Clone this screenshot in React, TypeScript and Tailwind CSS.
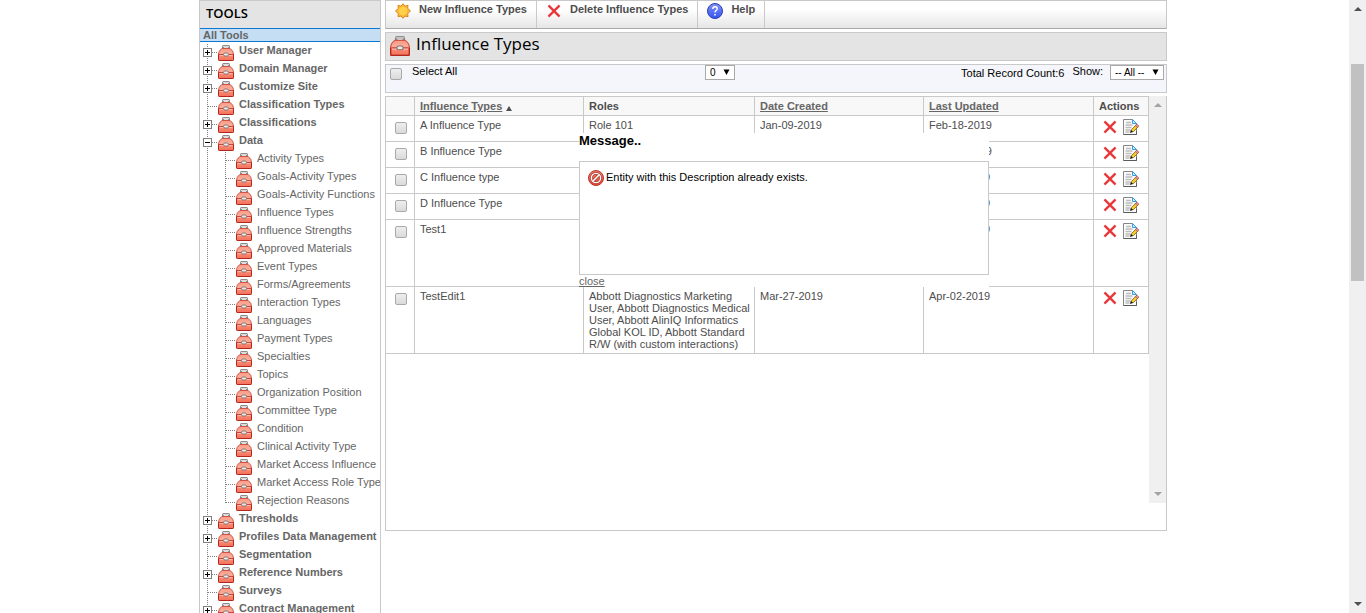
import React from "react";

type Node = { label: string; kind: "plus" | "minus" | "leaf"; children?: string[] };

const tree: Node[] = [
  { label: "User Manager", kind: "plus" },
  { label: "Domain Manager", kind: "plus" },
  { label: "Customize Site", kind: "plus" },
  { label: "Classification Types", kind: "leaf" },
  { label: "Classifications", kind: "plus" },
  {
    label: "Data",
    kind: "minus",
    children: [
      "Activity Types",
      "Goals-Activity Types",
      "Goals-Activity Functions",
      "Influence Types",
      "Influence Strengths",
      "Approved Materials",
      "Event Types",
      "Forms/Agreements",
      "Interaction Types",
      "Languages",
      "Payment Types",
      "Specialties",
      "Topics",
      "Organization Position",
      "Committee Type",
      "Condition",
      "Clinical Activity Type",
      "Market Access Influence",
      "Market Access Role Type",
      "Rejection Reasons",
    ],
  },
  { label: "Thresholds", kind: "plus" },
  { label: "Profiles Data Management", kind: "plus" },
  { label: "Segmentation", kind: "leaf" },
  { label: "Reference Numbers", kind: "plus" },
  { label: "Surveys", kind: "leaf" },
  { label: "Contract Management", kind: "plus" },
];

const rows = [
  { name: "A Influence Type", roles: "Role 101", created: "Jan-09-2019", updated: "Feb-18-2019", height: "h-[26px]" },
  { name: "B Influence Type", roles: "", created: "", updated: "Mar-27-2019", height: "h-[26px]" },
  { name: "C Influence type", roles: "", created: "", updated: "Apr-02-2019", height: "h-[26px]" },
  { name: "D Influence Type", roles: "", created: "", updated: "Apr-02-2019", height: "h-[26px]" },
  { name: "Test1", roles: "", created: "", updated: "Apr-02-2019", height: "h-[67px]" },
  {
    name: "TestEdit1",
    roles:
      "Abbott Diagnostics Marketing User, Abbott Diagnostics Medical User, Abbott AlinIQ Informatics Global KOL ID, Abbott Standard R/W (with custom interactions)",
    created: "Mar-27-2019",
    updated: "Apr-02-2019",
    height: "h-[67px]",
  },
];

function Toolbox({ className }: { className: string }) {
  return (
    <svg viewBox="0 0 16 16" className={className} aria-hidden="true">
      <defs>
        <linearGradient id="toolboxBody" x1="0" y1="0" x2="0" y2="1">
          <stop offset="0" stopColor="#f79a86" />
          <stop offset="0.4" stopColor="#fcae9a" />
          <stop offset="0.6" stopColor="#f88a74" />
          <stop offset="1" stopColor="#f4705a" />
        </linearGradient>
      </defs>
      <path d="M4 3.500V1.500Q4 0 5.500 0h5Q12 0 12 1.500v2z" fill="#8b8b8b" />
      <path d="M5 1h6v1H5z" fill="#dcdcdc" />
      <path d="M6 2.200h4v.9H6z" fill="#f4f4f4" />
      <path d="M3.800 3.500h8.400Q15.500 6 15.500 9v5.500q0 1-1 1h-13q-1 0-1-1V9Q.5 6 3.800 3.500z" fill="url(#toolboxBody)" stroke="#cf5546" />
      <path d="M.5 9.500v5q0 1 1 1h13q1 0 1-1v-5" fill="none" stroke="#b3261c" />
      <path d="M1 9.500h14" stroke="#c4483b" />
      <path d="M1.500 10.500h13" stroke="#ffc0ae" strokeWidth=".8" />
      <rect x="5.500" y="8" width="5" height="3" rx="1.400" fill="#e9e9e9" stroke="#85716d" strokeWidth=".9" />
    </svg>
  );
}

function Branch({ kind, last }: { kind: "plus" | "minus" | "leaf" | "line"; last?: boolean }) {
  return (
    <svg viewBox="0 0 18 18" className="h-[18px] w-[18px] shrink-0" shapeRendering="crispEdges" aria-hidden="true">
      <path d={last ? "M7.500 0v9" : "M7.500 0v18"} stroke="#808080" strokeDasharray="1 1" />
      {kind !== "line" && <path d="M8 8.500h10" stroke="#808080" strokeDasharray="1 1" />}
      {(kind === "plus" || kind === "minus") && (
        <>
          <rect x="3.500" y="4.500" width="8" height="8" fill="#fff" stroke="#808080" />
          <path d={kind === "plus" ? "M5 8.500h5M7.500 6v5" : "M5 8.500h5"} stroke="#000" />
        </>
      )}
    </svg>
  );
}

function Sun() {
  return (
    <svg viewBox="0 0 16 16" className="h-4 w-4" aria-hidden="true">
      <path
        d="M8 .7l1.900 2.500 3.100-.9-.3 3 2.800 2.700-2.800 2.500.3 3.200-3.100-.7L8 15.400l-1.900-2.400-3.100.7.300-3.200L.5 8l2.800-2.700-.3-3 3.100.9z"
        fill="#fbbd35"
        stroke="#dc8420"
      />
      <circle cx="8" cy="8" r="4" fill="#ffd04a" />
    </svg>
  );
}

function Cross() {
  return (
    <svg viewBox="0 0 16 16" className="h-4 w-4" aria-hidden="true">
      <path d="M2.500 2.500L13.500 13.500M13.500 2.500L2.500 13.500" stroke="#f4a6a6" strokeWidth="2.800" />
      <path d="M2.500 2.500L13.500 13.500M13.500 2.500L2.500 13.500" stroke="#e63235" strokeWidth="1.800" />
    </svg>
  );
}

function HelpIcon() {
  return (
    <svg viewBox="0 0 16 16" className="h-4 w-4" aria-hidden="true">
      <defs>
        <linearGradient id="helpFill" x1="0" y1="0" x2="0" y2="1">
          <stop offset="0" stopColor="#8593f2" />
          <stop offset="1" stopColor="#3354f2" />
        </linearGradient>
      </defs>
      <circle cx="8" cy="8" r="7.500" fill="url(#helpFill)" stroke="#2b3cae" />
      <path d="M5.800 6q0-2.200 2.200-2.200T10.200 5.800q0 1.100-1.100 1.800Q8 8.300 8 9.600" fill="none" stroke="#fff" strokeWidth="1.400" />
      <path d="M7.200 11h1.600v1.600H7.200z" fill="#fff" />
    </svg>
  );
}

function EditIcon() {
  return (
    <svg viewBox="0 0 16 16" className="h-4 w-4" aria-hidden="true">
      <path d="M.5.500h9L13.500 4.500v11H.5z" fill="#fbfbfb" stroke="#858585" />
      <path d="M.5 15.500h13V12" fill="none" stroke="#5c5c5c" />
      <path d="M3 3.500h5M2.500 6h7M2.500 8.500h6M2.500 11h5M2.500 13h4" stroke="#bdbdbd" strokeWidth="1.400" />
      <path d="M9.500.5v4h4z" fill="#cfeaff" stroke="#3b9be0" />
      <path d="M8 12.500l.6-2 4.600-4.600 2 2-4.700 4.600z" fill="#f9cb2c" stroke="#7a5a16" strokeWidth=".8" />
      <path d="M12.300 6.500l1-1q.6-.5 1.200.1l.9.900q.6.600 0 1.200l-1 1z" fill="#ee8f8f" stroke="#8c4444" strokeWidth=".6" />
      <path d="M7 14l.9-3 2.100 2.100z" fill="#111" />
    </svg>
  );
}

function StopIcon() {
  return (
    <svg viewBox="0 0 16 16" className="h-4 w-4 shrink-0" aria-hidden="true">
      <defs>
        <linearGradient id="stopFill" x1="0" y1="0" x2="0" y2="1">
          <stop offset="0" stopColor="#f0806f" />
          <stop offset="1" stopColor="#ec4430" />
        </linearGradient>
      </defs>
      <circle cx="8" cy="8" r="7.500" fill="url(#stopFill)" stroke="#b8392c" />
      <circle cx="8" cy="8" r="4.600" fill="none" stroke="#a5362b" strokeWidth="2.600" />
      <path d="M5 11l6-6" stroke="#a5362b" strokeWidth="3" />
      <circle cx="8" cy="8" r="4.600" fill="none" stroke="#fff" strokeWidth="1.400" />
      <path d="M5 11l6-6" stroke="#fff" strokeWidth="1.600" />
    </svg>
  );
}

function Triangle({ down, className }: { down?: boolean; className: string }) {
  return (
    <svg viewBox="0 0 8 4" preserveAspectRatio="none" className={className} aria-hidden="true">
      <path d={down ? "M0 0h8L4 4z" : "M0 4h8L4 0z"} fill="currentColor" />
    </svg>
  );
}

function Tick({ label, id }: { label?: string; id?: string }) {
  return (
    <input
      type="checkbox"
      id={id}
      aria-label={label}
      className="block h-3 w-3 shrink-0 appearance-none rounded-[2px] border border-[#a9a9a9] bg-linear-to-b from-[#eeeeee] to-[#dadada]"
    />
  );
}

function Picker({ id, label, value, className }: { id: string; label?: string; value: string; className: string }) {
  return (
    <span className={`relative block ${className}`}>
      <select
        id={id}
        aria-label={label}
        className="block h-[15px] w-full appearance-none border border-[#a9a9a9] bg-white pl-1 text-[10px] leading-[13px] text-black"
      >
        <option>{value}</option>
      </select>
      <svg viewBox="0 0 8 7" className="pointer-events-none absolute top-1 right-[5px] h-[6px] w-[7px]" aria-hidden="true">
        <path d="M.5.500h7L4 7z" fill="#000" />
      </svg>
    </span>
  );
}

function ToolButton({ icon, children }: { icon: React.ReactNode; children: string }) {
  return (
    <button type="button" className="flex items-start gap-2 border-r border-[#c9c9c9] pt-[2px] pr-[9px] pl-[9px] text-left">
      {icon}
      <span className="font-bold text-[#4d4d4d]">{children}</span>
    </button>
  );
}

export default function App() {
  return (
    <div className="flex h-screen overflow-hidden bg-white font-['Liberation_Sans',Arial,sans-serif] text-[11px] leading-3 text-[#4d4d4d]">
      <div className="flex min-w-0 flex-1 justify-center pl-[17px]">
        <div className="flex w-full max-w-[968px] gap-1">
          <aside className="w-[182px] shrink-0 overflow-hidden border border-b-0 border-[#c9c9c9]">
            <h2 className="h-[27px] bg-[#e4e4e4] pt-[3px] pl-[6px] font-['Open_Sans',sans-serif] text-[13px] leading-[18px] font-semibold text-black">
              TOOLS
            </h2>
            <a href="#all" className="block border-y border-[#0a78d0] bg-[#c5def4] pl-[3px] font-bold text-[#666]">
              All Tools
            </a>
            <ul className="pt-[2px] whitespace-nowrap text-[#666]">
              {tree.map((n) => (
                <li key={n.label}>
                  <div className="flex h-[18px]">
                    <Branch kind={n.kind} />
                    <Toolbox className="mt-px h-4 w-4 shrink-0" />
                    <a href="#tool" className="pl-[5px] font-bold">
                      {n.label}
                    </a>
                  </div>
                  {n.children && (
                    <ul>
                      {n.children.map((c, i) => (
                        <li key={c} className="flex h-[18px]">
                          <Branch kind="line" />
                          <Branch kind="leaf" last={i === n.children!.length - 1} />
                          <Toolbox className="mt-px h-4 w-4 shrink-0" />
                          <a href="#tool" className="pl-[5px]">
                            {c}
                          </a>
                        </li>
                      ))}
                    </ul>
                  )}
                </li>
              ))}
            </ul>
          </aside>

          <main className="flex min-w-0 flex-1 flex-col gap-[3px]">
            <div className="flex h-[29px] shrink-0 border border-[#c9c9c9] border-b-[#a9a9a9] bg-linear-to-b from-white from-30% to-[#e6e6e6]">
              <ToolButton icon={<Sun />}>New Influence Types</ToolButton>
              <ToolButton icon={<Cross />}>Delete Influence Types</ToolButton>
              <ToolButton icon={<HelpIcon />}>Help</ToolButton>
            </div>

            <div className="flex h-[29px] shrink-0 items-start gap-[6px] border border-[#c9c9c9] bg-[#e4e4e4] pl-1">
              <Toolbox className="mt-[3px] h-5 w-5" />
              <h1 className="font-['Open_Sans',sans-serif] text-[17px] leading-[22px] text-black">Influence Types</h1>
            </div>

            <div className="grid h-[29px] shrink-0 grid-cols-[41%_auto_1fr] items-start border border-[#c9c9c9] bg-[#f4f6fb] pr-[2px] text-black">
              <div className="flex items-start gap-[10px] pl-1">
                <span className="pt-[3px]">
                  <Tick id="select-all" />
                </span>
                <label htmlFor="select-all">Select All</label>
              </div>
              <Picker id="page" label="Page" value="0" className="w-[30px]" />
              <div className="flex items-start justify-end">
                <span className="pt-[2px]">Total Record Count:6</span>
                <label htmlFor="show" className="pr-[7px] pl-2">
                  Show:
                </label>
                <Picker id="show" value="-- All --" className="w-[54px]" />
              </div>
            </div>

            <section className="relative flex h-[435px] shrink-0 border border-[#c9c9c9]">
              <div className="min-w-0 flex-1">
                <table className="w-full table-fixed border-separate border-spacing-0 [&_td]:border-r [&_td]:border-b [&_td]:border-[#c9c9c9] [&_td]:px-[5px] [&_td]:pt-[3px] [&_td]:align-top [&_th]:border-r [&_th]:border-b [&_th]:border-[#c9c9c9] [&_th]:px-[5px] [&_th]:py-[3px] [&_th]:text-left">
                  <thead>
                    <tr className="h-[19px] bg-[#f8f8f8]">
                      <th className="w-[29px]" aria-label="Select" />
                      <th className="w-[169px]">
                        <a href="#name" className="text-[#666] underline">
                          Influence Types
                        </a>
                        <Triangle className="ml-1 inline-block h-[5px] w-[6px] align-[-1px]" />
                      </th>
                      <th className="w-[171px]">Roles</th>
                      <th className="w-[169px]">
                        <a href="#created" className="text-[#666] underline">
                          Date Created
                        </a>
                      </th>
                      <th>
                        <a href="#updated" className="text-[#666] underline">
                          Last Updated
                        </a>
                      </th>
                      <th className="w-[55px]">Actions</th>
                    </tr>
                  </thead>
                  <tbody>
                    {rows.map((r) => (
                      <tr key={r.name} className={r.height}>
                        <td>
                          <div className="pt-[3px] pl-1">
                            <Tick label={r.name} />
                          </div>
                        </td>
                        <td>{r.name}</td>
                        <td className="pr-0!">{r.roles}</td>
                        <td>{r.created}</td>
                        <td>{r.updated}</td>
                        <td>
                          <div className="flex gap-[5px] pl-[3px]">
                            <button type="button" aria-label="Delete">
                              <Cross />
                            </button>
                            <button type="button" aria-label="Edit">
                              <EditIcon />
                            </button>
                          </div>
                        </td>
                      </tr>
                    ))}
                  </tbody>
                </table>
              </div>
              <div className="-mt-px flex h-[407px] w-[17px] shrink-0 flex-col items-center justify-between bg-[#f0f0f0] py-[7px] text-[#a3a3a3]">
                <Triangle className="h-1 w-2" />
                <Triangle down className="h-1 w-2" />
              </div>

              <div role="dialog" aria-labelledby="message-title" className="absolute top-9 left-[193px] w-[410px] bg-white text-black">
                <h2 id="message-title" className="h-7 text-[13px] leading-4 font-bold">
                  Message..
                </h2>
                <div className="flex h-[114px] items-start border border-[#c9c9c9] p-2">
                  <StopIcon />
                  <p className="pt-[1px] pl-[2px]">Entity with this Description already exists.</p>
                </div>
                <a href="#close" className="block text-[#666] underline">
                  close
                </a>
              </div>
            </section>
          </main>
        </div>
      </div>

      <div className="flex w-[17px] shrink-0 flex-col items-center justify-between bg-[#f0f0f0] py-[7px] text-[#505050]">
        <Triangle className="h-1 w-2" />
        <div className="flex w-full flex-1 flex-col items-center pt-[53px]">
          <div className="h-[217px] w-[13px] bg-[#c1c1c1]" />
        </div>
        <Triangle down className="h-1 w-2" />
      </div>
    </div>
  );
}
